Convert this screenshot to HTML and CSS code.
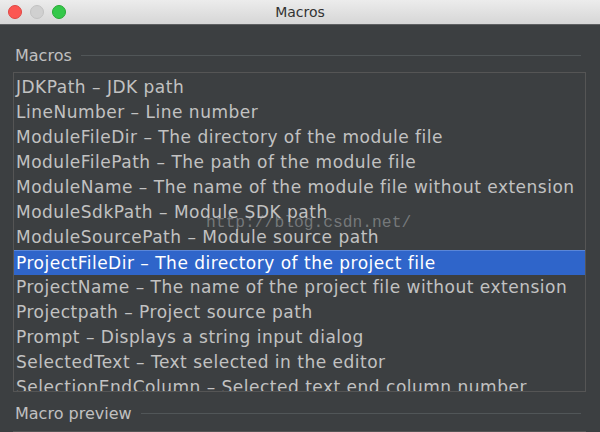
FILE: index.html
```html
<!DOCTYPE html>
<html>
<head>
	<meta charset="UTF-8">
	<title>Macros</title>
	<link rel="stylesheet" href="styles.css">
</head>
<body>
<div id="win">
	<div class="titlebar">
		<span class="dot red"></span>
		<span class="dot gray"></span>
		<span class="dot green"></span>
		<div class="title">Macros</div>
	</div>
	<div class="content">
		<div class="group">
			<span class="label">Macros</span>
			<span class="rule"></span>
		</div>
		<ul class="list">
			<li>JDKPath – JDK path</li>
			<li>LineNumber – Line number</li>
			<li>ModuleFileDir – The directory of the module file</li>
			<li>ModuleFilePath – The path of the module file</li>
			<li>ModuleName – The name of the module file without extension</li>
			<li>ModuleSdkPath – Module SDK path</li>
			<li>ModuleSourcePath – Module source path</li>
			<li class="sel">ProjectFileDir – The directory of the project file</li>
			<li>ProjectName – The name of the project file without extension</li>
			<li>Projectpath – Project source path</li>
			<li>Prompt – Displays a string input dialog</li>
			<li>SelectedText – Text selected in the editor</li>
			<li>SelectionEndColumn – Selected text end column number</li>
		</ul>
		<div class="group second">
			<span class="label">Macro preview</span>
			<span class="rule"></span>
		</div>
		<div class="preview"></div>
	</div>
	<div class="mark">http://blog.csdn.net/</div>
</div>
</body>
</html>
```

FILE: styles.css
```css
body,ul,li{
	padding:0;
	margin:0;
}
li{
	list-style:none;
}
body{
	background:#3c3f41;
	font-family:"DejaVu Sans",sans-serif;
	overflow:hidden;
}
#win{
	width:600px;
	height:432px;
	position:relative;
	overflow:hidden;
}
.titlebar{
	height:24px;
	background:linear-gradient(#ececec,#d6d6d6);
	border-bottom:1px solid #5e6062;
	display:flex;
	align-items:center;
	padding-left:8px;
	position:relative;
}
.dot{
	width:12px;
	height:12px;
	border-radius:50%;
	margin-right:8px;
}
.red{ background:#fc5753; border:0.5px solid #df4744; }
.gray{ background:#d0d0d0; border:0.5px solid #c2c2c2; }
.green{ background:#34c84a; border:0.5px solid #27aa35; }
.title{
	position:absolute;
	left:0;
	right:0;
	text-align:center;
	font-size:14px;
	color:#333;
}
.content{
	padding:19px 14px 0 13px;
}
.group{
	display:flex;
	align-items:center;
	height:22px;
}
.label{
	color:#c0c0c0;
	font-size:16px;
	padding:0 9px 0 2px;
}
.rule{
	flex:1;
	height:1px;
	background:#515658;
	margin-right:5px;
}
.list{
	margin-top:6px;
	border:1px solid #555;
	height:316px;
	overflow:hidden;
	padding-top:2px;
}
.list li{
	height:25px;
	line-height:25px;
	padding-left:2px;
	color:#c2c2c2;
	font-size:17px;
	letter-spacing:0.5px;
	white-space:nowrap;
}
.list .sel{
	background:#2f65ca;
	color:#fff;
	border-top:1px solid #5a86d8;
	height:24px;
	line-height:24px;
}
.second{
	margin-top:10px;
}
.preview{
	margin-top:7px;
	border-top:1px solid #555;
	height:40px;
}
.mark{
	position:absolute;
	left:206px;
	top:213px;
	font:16.3px "Liberation Mono",monospace;
	color:rgba(190,192,195,0.45);
}
```
